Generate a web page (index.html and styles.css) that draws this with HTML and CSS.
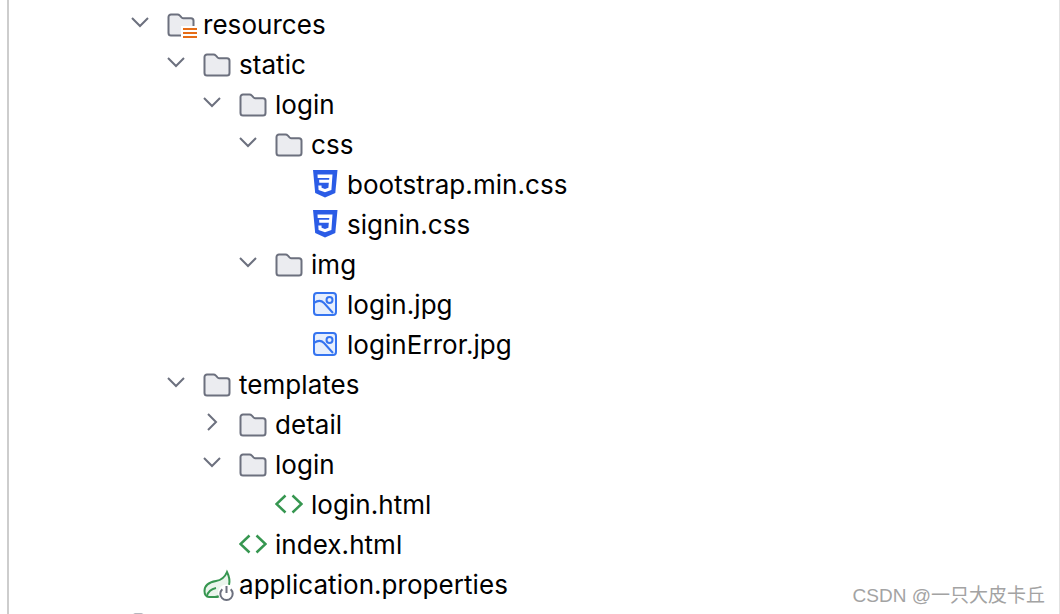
FILE: index.html
```html
<!DOCTYPE html>
<html lang="en">
<head>
    <meta charset="UTF-8">
    <meta name="viewport" content="width=device-width, initial-scale=1.0">
    <title>Project tree</title>
    <link rel="stylesheet" href="styles.css">
</head>
<body>
    <svg class="sprites" width="0" height="0">
        <symbol id="chevron-down" viewBox="0 0 18 12">
            <path d="M1 2 9 10 17 2" fill="none" stroke="#6c707e" stroke-width="2"></path>
        </symbol>
        <symbol id="chevron-right" viewBox="0 0 12 18">
            <path d="M2 1 10 9 2 17" fill="none" stroke="#6c707e" stroke-width="2"></path>
        </symbol>
        <symbol id="folder" viewBox="0 0 28 24">
            <path d="M4 1.500h6.500c1 0 1.700.4 2.400 1.100l1.600 1.800c.6.600 1.200.9 2 .9H24c1.400 0 2.500 1.100 2.500 2.500V20c0 1.400-1.100 2.500-2.500 2.500H4A2.500 2.500 0 0 1 1.500 20V4A2.500 2.500 0 0 1 4 1.500z" fill="#ebecf0" stroke="#6c707e" stroke-width="2"></path>
        </symbol>
        <symbol id="css" viewBox="0 0 28 30">
            <path d="M2 1h24.500l-2.200 23L14 28.500 4.200 24z" fill="#2b5ce6"></path>
            <path d="M6.500 5.500h15l-1.100 15.500-6.400 2.300-6.400-2.300-.3-4.500h3.200l.1 2.200 3.400 1.200 3.400-1.200.4-5H8.300l-.2-3h10l.2-1.800H6.700z" fill="#fff"></path>
        </symbol>
        <symbol id="image" viewBox="0 0 28 26">
            <rect x="3" y="2" width="22" height="22" rx="3" fill="#e7effd" stroke="#3574f0" stroke-width="2"></rect>
            <path d="M3 12c4-3 7-3 10 0l9 10" fill="none" stroke="#3574f0" stroke-width="2"></path>
            <circle cx="18.500" cy="9" r="3" fill="none" stroke="#3574f0" stroke-width="2"></circle>
        </symbol>
        <symbol id="html" viewBox="0 0 28 20">
            <path d="M10.500 1.500 1.500 10l9 8.500M17.500 1.500l9 8.500-9 8.500" fill="none" stroke="#369650" stroke-width="2.500"></path>
        </symbol>
        <symbol id="spring" viewBox="0 0 32 32">
            <path d="M2.500 22c0-6 5.500-9 11.500-10 6-1 9-4 11-9 2.500 5 3 9 2 13-2 7-8 12-14 12H7c-3 0-4.500-3-4.500-6z" fill="#eaf5ec" stroke="#369650" stroke-width="2"></path>
            <path d="M5 27c1-4 4-7 9-8" fill="none" stroke="#369650" stroke-width="2"></path>
            <circle cx="24.500" cy="24" r="8.500" fill="#fff"></circle>
            <path d="M20.300 20.200a6.200 6.200 0 1 0 8.400 0M24.500 17v7" fill="none" stroke="#6c707e" stroke-width="2"></path>
        </symbol>
    </svg>

    <div class="page">
        <ul class="tree">
            <li class="row d0">
                <span class="toggle"><svg class="chev-down"><use href="#chevron-down"></use></svg></span>
                <span class="icon">
                    <svg class="ic-folder"><use href="#folder"></use></svg>
                    <span class="res-lines"></span>
                </span>
                <span class="label">resources</span>
            </li>
            <li class="row d1">
                <span class="toggle"><svg class="chev-down"><use href="#chevron-down"></use></svg></span>
                <span class="icon"><svg class="ic-folder"><use href="#folder"></use></svg></span>
                <span class="label">static</span>
            </li>
            <li class="row d2">
                <span class="toggle"><svg class="chev-down"><use href="#chevron-down"></use></svg></span>
                <span class="icon"><svg class="ic-folder"><use href="#folder"></use></svg></span>
                <span class="label">login</span>
            </li>
            <li class="row d3">
                <span class="toggle"><svg class="chev-down"><use href="#chevron-down"></use></svg></span>
                <span class="icon"><svg class="ic-folder"><use href="#folder"></use></svg></span>
                <span class="label">css</span>
            </li>
            <li class="row d4">
                <span class="toggle"></span>
                <span class="icon"><svg class="ic-css"><use href="#css"></use></svg></span>
                <span class="label">bootstrap.min.css</span>
            </li>
            <li class="row d4">
                <span class="toggle"></span>
                <span class="icon"><svg class="ic-css"><use href="#css"></use></svg></span>
                <span class="label">signin.css</span>
            </li>
            <li class="row d3">
                <span class="toggle"><svg class="chev-down"><use href="#chevron-down"></use></svg></span>
                <span class="icon"><svg class="ic-folder"><use href="#folder"></use></svg></span>
                <span class="label">img</span>
            </li>
            <li class="row d4">
                <span class="toggle"></span>
                <span class="icon"><svg class="ic-image"><use href="#image"></use></svg></span>
                <span class="label">login.jpg</span>
            </li>
            <li class="row d4">
                <span class="toggle"></span>
                <span class="icon"><svg class="ic-image"><use href="#image"></use></svg></span>
                <span class="label">loginError.jpg</span>
            </li>
            <li class="row d1">
                <span class="toggle"><svg class="chev-down"><use href="#chevron-down"></use></svg></span>
                <span class="icon"><svg class="ic-folder"><use href="#folder"></use></svg></span>
                <span class="label">templates</span>
            </li>
            <li class="row d2">
                <span class="toggle"><svg class="chev-right"><use href="#chevron-right"></use></svg></span>
                <span class="icon"><svg class="ic-folder"><use href="#folder"></use></svg></span>
                <span class="label">detail</span>
            </li>
            <li class="row d2">
                <span class="toggle"><svg class="chev-down"><use href="#chevron-down"></use></svg></span>
                <span class="icon"><svg class="ic-folder"><use href="#folder"></use></svg></span>
                <span class="label">login</span>
            </li>
            <li class="row d3">
                <span class="toggle"></span>
                <span class="icon"><svg class="ic-html"><use href="#html"></use></svg></span>
                <span class="label">login.html</span>
            </li>
            <li class="row d2">
                <span class="toggle"></span>
                <span class="icon"><svg class="ic-html"><use href="#html"></use></svg></span>
                <span class="label">index.html</span>
            </li>
            <li class="row d1">
                <span class="toggle"></span>
                <span class="icon"><svg class="ic-spring"><use href="#spring"></use></svg></span>
                <span class="label">application.properties</span>
            </li>
            <li class="row dn">
                <span class="icon"><svg class="ic-folder"><use href="#folder"></use></svg></span>
            </li>
        </ul>
        <div class="watermark">CSDN @一只大皮卡丘</div>
    </div>
</body>
</html>
```

FILE: styles.css
```css
html, body {
    margin: 0;
    padding: 0;
    height: 100%;
    overflow: hidden;
    background: white;
}

.sprites {
    display: block;
    height: 0;
}

.page {
    position: relative;
    box-sizing: border-box;
    height: 614px;
    margin-left: 7px;
    padding-top: 5px;
    overflow: hidden;
    border-left: 2px solid #cdcdcd;
    border-right: 1px solid #e2e2e2;
    font-family: Inter, "Liberation Sans", sans-serif;
    font-size: 26px;
    letter-spacing: 0.05px;
    color: #000;
}

.tree {
    list-style: none;
    margin: 0;
    padding: 0;
}

.row {
    display: flex;
    align-items: center;
    height: 40px;
    white-space: nowrap;
}

.label {
    margin-bottom: 2px;
}

/* first column starts at x=127, each level is 36px */
.d0 { padding-left: 118px; }
.d1 { padding-left: 154px; }
.d2 { padding-left: 190px; }
.d3 { padding-left: 226px; }
.d4 { padding-left: 262px; }
.dn { padding-left: 122px; }

.toggle {
    display: flex;
    align-items: center;
    width: 40px;
    height: 40px;
    flex-shrink: 0;
}

.chev-down {
    width: 18px;
    height: 12px;
    margin: -6px 0 0 4px;
}

.chev-right {
    width: 12px;
    height: 18px;
    margin: -6px 0 0 7px;
}

.icon {
    position: relative;
    display: flex;
    align-items: center;
    width: 36px;
    height: 40px;
    flex-shrink: 0;
}

.ic-folder {
    width: 28px;
    height: 24px;
    margin-top: -1px;
}

.ic-css {
    width: 28px;
    height: 30px;
    margin-top: -2px;
}

.ic-image {
    width: 28px;
    height: 26px;
    margin-top: -3px;
}

.ic-html {
    width: 28px;
    height: 20px;
    margin-top: -3px;
}

.ic-spring {
    width: 32px;
    height: 32px;
    margin-left: -1px;
}

.res-lines {
    position: absolute;
    left: 14px;
    top: 21px;
    width: 14px;
    height: 10px;
    border-left: 2px solid white;
    border-top: 2px solid white;
    background: repeating-linear-gradient(#e66d17 0 2px, white 2px 4px);
}

.watermark {
    position: absolute;
    right: 14px;
    bottom: 7px;
    font-family: "Liberation Sans", "Noto Sans CJK SC", sans-serif;
    font-size: 19px;
    letter-spacing: 0;
    color: #a3a3a3;
}
```
